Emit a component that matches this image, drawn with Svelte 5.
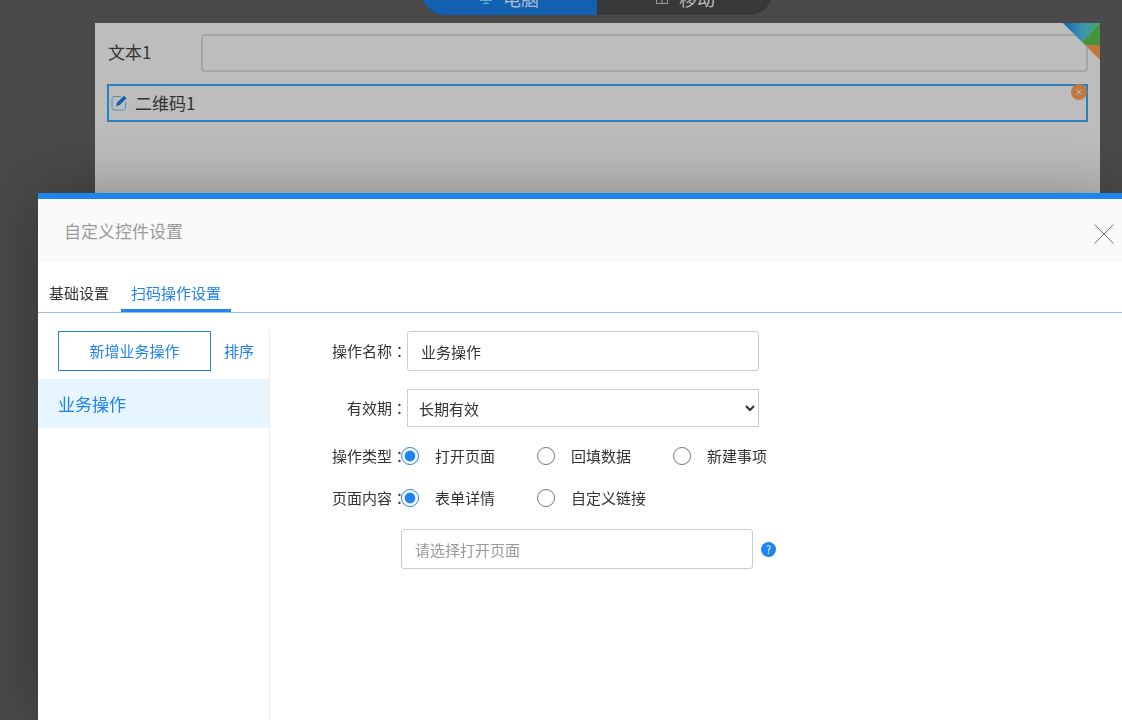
<script lang="ts">
  let device = $state("pc");
  let tab = $state("scan");
  let text = $state("");
  let name = $state("业务操作");
  let validity = $state("forever");
  let actionType = $state("open");
  let pageContent = $state("detail");

  const devices = [
    { id: "pc", label: "电脑" },
    { id: "mobile", label: "移动" },
  ];

  const tabs = [
    { id: "base", label: "基础设置" },
    { id: "scan", label: "扫码操作设置" },
  ];

  const actionTypes = [
    { id: "open", label: "打开页面" },
    { id: "fill", label: "回填数据" },
    { id: "create", label: "新建事项" },
  ];

  const pageContents = [
    { id: "detail", label: "表单详情" },
    { id: "link", label: "自定义链接" },
  ];
</script>

<div class="designer">
  <div class="devices">
    {#each devices as d}
      <button
        class="device"
        class:active={device === d.id}
        type="button"
        onclick={() => (device = d.id)}
      >
        {#if d.id === "pc"}
          <svg class="pc-icon" width="14" height="14" viewBox="0 0 14 14" aria-hidden="true">
            <path d="M1 1.5h12v6H1zM7 7.5v5M1 9.500h12M4 12.500h6" />
          </svg>
        {:else}
          <svg width="14" height="14" viewBox="0 0 14 14" aria-hidden="true">
            <path d="M1.5 1h11v11.500h-11zM1.5 8.5h11M7 4v8.500" />
          </svg>
        {/if}
        {d.label}
      </button>
    {/each}
  </div>

  <main class="canvas">
    <svg class="corner" width="37" height="37" viewBox="0 0 37 37" aria-hidden="true">
      <defs>
        <linearGradient id="fold" x1="0" y1="0" x2="1" y2="0">
          <stop offset="0" stop-color="#0f62b4" />
          <stop offset="0.5" stop-color="#3c92b0" />
          <stop offset="1" stop-color="#49a56c" />
        </linearGradient>
      </defs>
      <path d="M0 0h37L19 19z" fill="url(#fold)" />
      <path d="M37 0v22H22l-3-3z" fill="#45933f" />
      <path d="M22 22h15v15z" fill="#bf7840" />
    </svg>

    <div class="field">
      <label for="text1">文本1</label>
      <input id="text1" type="text" bind:value={text} />
    </div>

    <div class="field selected">
      <svg width="16" height="16" viewBox="0 0 16 16" aria-hidden="true">
        <path
          d="M10 1.5H3A2 2 0 0 0 1 3.500V13a2 2 0 0 0 2 2h9.500a2 2 0 0 0 2-2V7"
          fill="none"
          stroke="#5590c4"
        />
        <path d="M5 11.300l1-3.800L13 .8l2.500 2.400-6.700 6.800z" fill="#1560b0" />
      </svg>
      <span>二维码1</span>
      <button class="remove" type="button" aria-label="删除">
        <svg width="16" height="16" viewBox="0 0 16 16">
          <circle cx="8" cy="8" r="8" fill="#bf7840" />
          <path d="M5.500 5.500l5 5M10.500 5.500l-5 5" stroke="#bdbdbd" />
        </svg>
      </button>
    </div>
  </main>
</div>

<div class="dialog" role="dialog" aria-labelledby="dialog-title">
  <header class="dialog-header">
    <h2 id="dialog-title">自定义控件设置</h2>
    <button class="close" type="button" aria-label="关闭">
      <svg width="20" height="20" viewBox="0 0 20 20">
        <path d="M0.500 0.500l19 19M19.500 0.500l-19 19" stroke="#777" />
      </svg>
    </button>
  </header>

  <nav class="tabs">
    {#each tabs as t}
      <button
        class="tab"
        class:active={tab === t.id}
        type="button"
        onclick={() => (tab = t.id)}>{t.label}</button
      >
    {/each}
  </nav>

  <div class="dialog-body">
    <aside class="sidebar">
      <div class="actions">
        <button class="add" type="button">新增业务操作</button>
        <button class="sort" type="button">排序</button>
      </div>
      <button class="item" type="button">业务操作</button>
    </aside>

    <form class="form">
      <div class="row">
        <label class="label" for="name">操作名称<i>：</i></label>
        <input id="name" class="box" type="text" bind:value={name} />
      </div>

      <div class="row">
        <label class="label" for="validity">有效期<i>：</i></label>
        <select id="validity" class="box" bind:value={validity}>
          <option value="forever">长期有效</option>
        </select>
      </div>

      <div class="row radios" role="radiogroup" aria-labelledby="type-label">
        <span class="label" id="type-label">操作类型<i>：</i></span>
        <div class="options">
          {#each actionTypes as o}
            <label class="option">
              <input type="radio" name="type" value={o.id} bind:group={actionType} />
              {o.label}
            </label>
          {/each}
        </div>
      </div>

      <div class="row radios" role="radiogroup" aria-labelledby="content-label">
        <span class="label" id="content-label">页面内容<i>：</i></span>
        <div class="options">
          {#each pageContents as o}
            <label class="option">
              <input type="radio" name="content" value={o.id} bind:group={pageContent} />
              {o.label}
            </label>
          {/each}
        </div>
      </div>

      <div class="row page-row">
        <input
          class="box"
          type="text"
          placeholder="请选择打开页面"
          aria-label="打开页面"
          readonly
        />
        <button class="help" type="button" aria-label="帮助">?</button>
      </div>
    </form>
  </div>
</div>

<style>
  :global(body) {
    background: #4a4a4a;
    overflow: hidden;
  }

  .designer,
  .dialog {
    font-family: "Noto Sans CJK SC", "Liberation Sans", sans-serif;
    font-size: 15px;
    line-height: 22px;
    color: #333;
  }

  button,
  input,
  select {
    font: inherit;
    color: inherit;
    box-sizing: border-box;
    margin: 0;
  }

  button {
    border: none;
    background: none;
    padding: 0;
    cursor: pointer;
  }

  svg {
    display: block;
    flex-shrink: 0;
  }

  .designer {
    display: flex;
    flex-direction: column;
    height: 100vh;
  }

  .devices {
    display: flex;
    align-self: center;
    width: 352px;
    height: 34px;
    margin: -19px 0 8px 72px;
    border-radius: 0 0 24px 24px;
    overflow: hidden;
    background: #383838;
  }

  .device {
    flex: 1;
    display: flex;
    align-items: center;
    justify-content: center;
    gap: 10px;
    font-size: 18px;
    color: #bdbdbd;
  }

  .device svg {
    fill: none;
    stroke: #9a9a9a;
  }

  .device.active {
    background: #1460b0;
    color: #a9bfd6;
  }

  .device .pc-icon {
    stroke: #5cb0d0;
  }

  .canvas {
    position: relative;
    flex: 1;
    margin: 0 22px 0 95px;
    padding: 11px 12px;
    background: #bdbdbd;
  }

  .corner {
    position: absolute;
    top: 0;
    right: 0;
  }

  .field {
    display: flex;
    align-items: center;
    margin-bottom: 12px;
    font-size: 17px;
  }

  .field label {
    width: 94px;
    box-sizing: border-box;
    padding: 0 0 2px 1px;
  }

  .field input {
    flex: 1;
    height: 38px;
    border: 2px solid #a6a6a6;
    border-radius: 4px;
    background: transparent;
  }

  .selected {
    position: relative;
    height: 38px;
    box-sizing: border-box;
    padding-left: 2px;
    gap: 8px;
    border: 2px solid #2a80bf;
  }

  .remove {
    position: absolute;
    top: -2px;
    right: -1px;
  }

  .dialog {
    position: fixed;
    inset: 193px 0 0 38px;
    display: flex;
    flex-direction: column;
    border-top: 6px solid #1f84ee;
    background: #fff;
    box-shadow: 0 0 60px rgba(0, 0, 0, 0.3);
  }

  .dialog-header {
    display: flex;
    align-items: center;
    justify-content: space-between;
    height: 63px;
    padding: 0 8px 0 26px;
    background: #fafafa;
  }

  .dialog-header h2 {
    margin: 0;
    font-size: 17px;
    font-weight: 400;
    color: #999;
  }

  .close {
    padding-top: 6px;
  }

  .tabs {
    display: flex;
    height: 50px;
    padding-left: 1px;
    border-bottom: 1px solid #8cc2f8;
  }

  .tab {
    padding: 14px 10px 0;
    border-bottom: 3px solid transparent;
  }

  .tab + .tab {
    margin-left: 2px;
  }

  .tab.active {
    border-color: #1f84ee;
    color: #1f80f4;
  }

  .dialog-body {
    flex: 1;
    display: flex;
    padding-top: 18px;
  }

  .sidebar {
    width: 232px;
    box-sizing: border-box;
    border-right: 1px solid #ebebeb;
    color: #1f80f4;
  }

  .actions {
    display: flex;
    gap: 13px;
    padding: 0 15px 8px 20px;
  }

  .add,
  .sort {
    padding-bottom: 1px;
  }

  .add {
    width: 153px;
    height: 40px;
    border: 1px solid #1f84ee;
  }

  .item {
    width: 100%;
    height: 49px;
    padding-left: 20px;
    background: #e6f5ff;
    font-size: 17px;
    text-align: left;
  }

  .form {
    padding-left: 52px;
  }

  .row {
    display: flex;
    align-items: center;
    margin-bottom: 18px;
  }

  .label {
    width: 85px;
    text-align: right;
    white-space: nowrap;
  }

  .label i {
    font-family: "Noto Sans CJK TC", sans-serif;
    font-style: normal;
  }

  .box {
    width: 352px;
    height: 40px;
    padding: 0 13px;
    border: 1px solid #ccc;
    border-radius: 3px;
    background: #fff;
  }

  select.box {
    height: 38px;
    padding: 0 5px 0 7px;
    border-radius: 0;
  }

  .box::placeholder {
    color: #999;
    opacity: 1;
  }

  .radios {
    height: 24px;
    margin: -1px 0 19px;
  }

  .options {
    display: flex;
    margin-left: -6px;
  }

  .option {
    display: flex;
    align-items: center;
    gap: 16px;
    width: 136px;
    white-space: nowrap;
  }

  .option input {
    width: 18px;
    height: 18px;
    accent-color: #1f84ee;
  }

  .page-row {
    gap: 8px;
    padding-left: 79px;
  }

  .help {
    width: 15px;
    height: 15px;
    border-radius: 50%;
    background: #1f84ee;
    color: #fff;
    font-size: 11px;
    line-height: 15px;
  }
</style>
